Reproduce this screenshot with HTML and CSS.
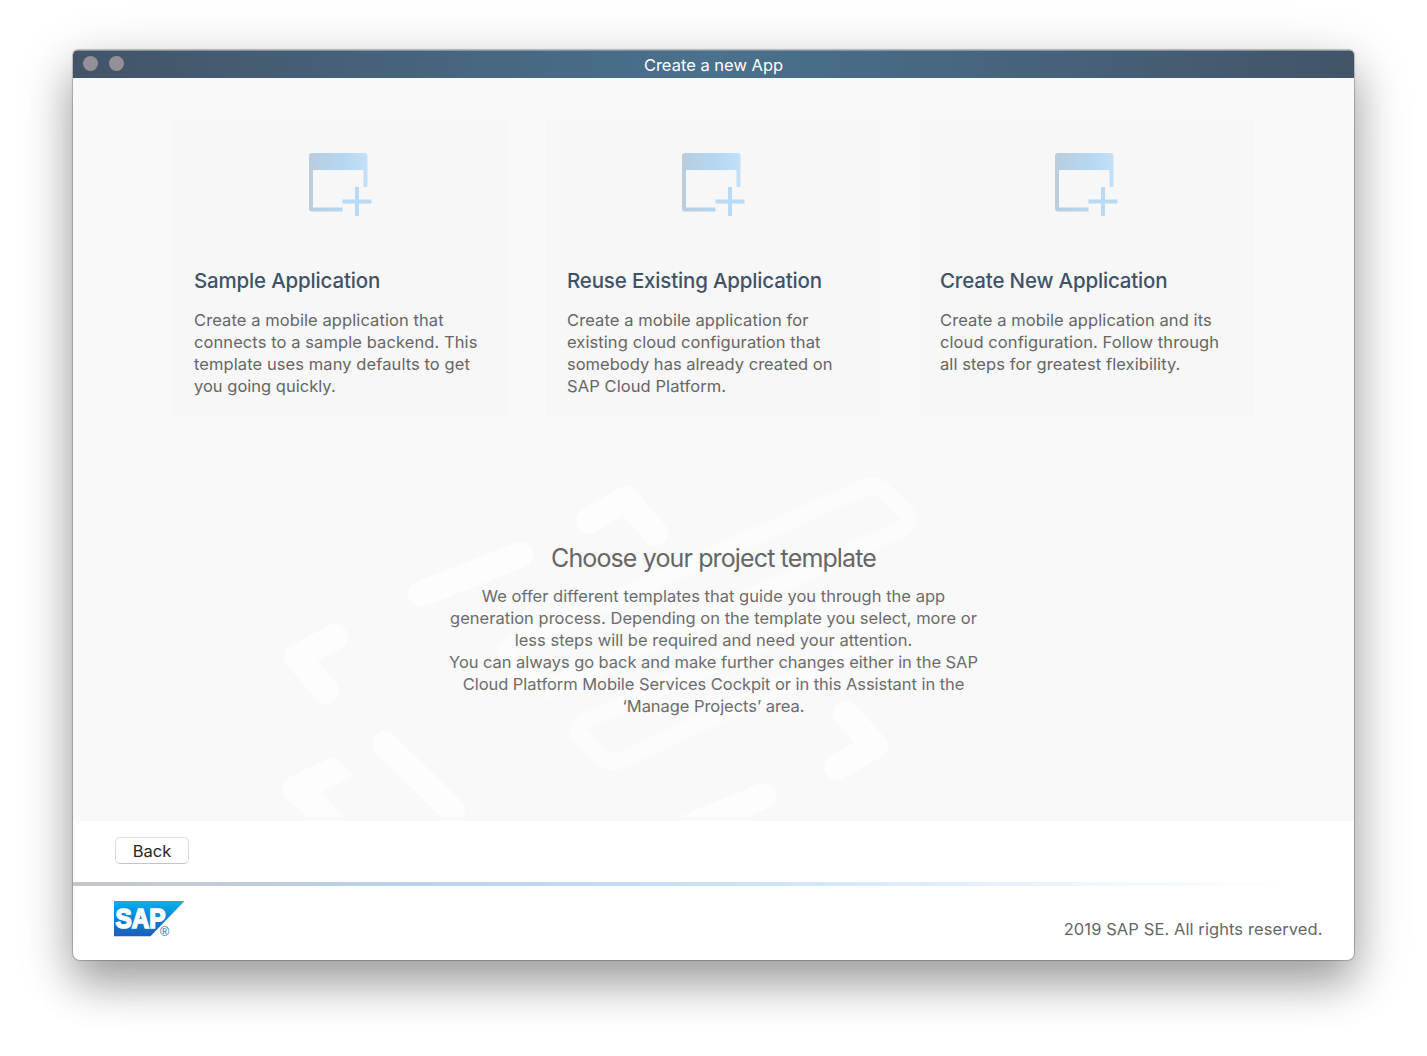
FILE: index.html
```html
<!DOCTYPE html>
<html lang="en">
<head>
<meta charset="utf-8">
<title>Create a new App</title>
<link rel="stylesheet" href="styles.css">
</head>
<body>
<svg class="defs" width="0" height="0" aria-hidden="true">
  <defs>
    <linearGradient id="appGrad" gradientUnits="userSpaceOnUse" x1="0" y1="0" x2="63" y2="0">
      <stop offset="0" stop-color="#b9cddd"/>
      <stop offset=".55" stop-color="#b5d7f3"/>
      <stop offset="1" stop-color="#c6e2f8"/>
    </linearGradient>
    <symbol id="newApp" viewBox="0 0 63 63">
      <path fill="url(#appGrad)" d="M3 0H55.500a3 3 0 0 1 3 3V34H54.500V17H4V54.500H33.500V58.500H3a3 3 0 0 1-3-3V3a3 3 0 0 1 3-3Z"/>
      <path fill="#b8daf4" d="M46 34h4v12.500h12.500v4H50V63h-4V50.500H33.500v-4H46Z"/>
    </symbol>
  </defs>
</svg>
<div class="window">
  <header class="titlebar">
    <div class="lights"><i></i><i></i></div>
    <h1>Create a new App</h1>
  </header>
  <main class="content">
    <svg class="backdrop" viewBox="73 78 1281 739" aria-hidden="true">
      <g fill="none" stroke="#fdfdfd" stroke-linecap="round" stroke-linejoin="round" stroke-width="26">
        <path d="M421 594 520 555"/>
        <path d="M335 637 297 657 326 691"/>
        <path d="M385 744 452 810"/>
        <path d="M589 520.500 626 499 655 533"/>
        <path d="M846 714 875 746 837 767"/>
        <path d="M763 796 680 831"/>
      </g>
      <path fill="#fdfdfd" d="M333.500 756.500 352 773Q354 775 351 777L321.700 792.500 344 817H307L286 799Q278 788 290 777Z"/>
      <g fill="none" stroke="#fcfcfc" stroke-linejoin="round" stroke-width="17">
        <path d="M864 487.500Q874 483 881 489L906 513Q913 522 903 528L553 687Q543 692 535 684L510 660Q502 651 513 644Z"/>
        <path d="M587 720Q573 727 581 736L603 758Q611 765 622 760L868 645Q878 640 870 630L853 612Q848 604 837 609Z"/>
      </g>
    </svg>
    <section class="cards">
      <article class="card">
        <svg class="icon"><use href="#newApp"/></svg>
        <h2>Sample Application</h2>
        <p>Create a mobile application that<br>connects to a sample backend. This<br>template uses many defaults to get<br><span class="tight">you going quickly.</span></p>
      </article>
      <article class="card">
        <svg class="icon"><use href="#newApp"/></svg>
        <h2>Reuse Existing Application</h2>
        <p>Create a mobile application for<br>existing cloud configuration that<br><span class="tight">somebody has already created on</span><br>SAP Cloud Platform.</p>
      </article>
      <article class="card">
        <svg class="icon"><use href="#newApp"/></svg>
        <h2>Create New Application</h2>
        <p>Create a mobile application and its<br>cloud configuration. Follow through<br>all steps for greatest flexibility.</p>
      </article>
    </section>
    <section class="intro">
      <h2>Choose your project template</h2>
      <p class="offer">We offer different templates that guide you through the app<br>generation process. Depending on the template you select, more or<br>less steps will be required and need your attention.</p>
      <p>You can always go back and make further changes either in the SAP<br>Cloud Platform Mobile Services Cockpit or in this Assistant in the<br>‘Manage Projects’ area.</p>
    </section>
  </main>
  <nav class="actions"><button type="button">Back</button></nav>
  <div class="divider"></div>
  <footer class="footer">
    <svg class="logo" viewBox="0 0 71 36" role="img" aria-label="SAP">
      <defs>
        <linearGradient id="sapGrad" x1="0" y1="0" x2="0" y2="1">
          <stop offset="0" stop-color="#06b0ee"/>
          <stop offset=".5" stop-color="#0a83d2"/>
          <stop offset="1" stop-color="#1d5dbd"/>
        </linearGradient>
      </defs>
      <path fill="url(#sapGrad)" d="M0 0H70.500L36.500 35.200H0Z"/>
      <text class="logo-name" x="1.500" y="27" textLength="50" lengthAdjust="spacingAndGlyphs">SAP</text>
      <text class="logo-mark" x="50.600" y="34.500">®</text>
    </svg>
    <p>2019 SAP SE. All rights reserved.</p>
  </footer>
</div>
</body>
</html>
```
FILE: styles.css
```css
* { box-sizing: border-box; margin: 0; padding: 0; }
body {
  height: 1056px;
  padding: 50px 73px 96px;
  overflow: hidden;
  background: #fff;
  color: #666;
  font: 16.5px/22px Inter, "Liberation Sans", sans-serif;
}
.defs { position: absolute; }
.window {
  display: flex;
  flex-direction: column;
  height: 910px;
  border-radius: 5px 5px 7px 7px;
  background: #fff;
  overflow: hidden;
  box-shadow: 0 0 1px 1px rgba(0,0,0,.22), 0 24px 40px rgba(0,0,0,.26), 0 14px 60px rgba(0,0,0,.2);
}
.titlebar {
  display: grid;
  grid-template-columns: 1fr auto 1fr;
  align-items: center;
  height: 28px;
  padding: 0 10px;
  border-top: 1px solid #7e95a5;
  background: linear-gradient(90deg, #435468, #4a718d 50%, #435468);
  color: #fff;
}
.titlebar h1 { font-size: 16.5px; font-weight: 400; line-height: 22px; }
.lights { display: flex; gap: 11px; padding-bottom: 2px; }
.lights i { width: 15px; height: 15px; border-radius: 50%; background: #939197; }
.content { position: relative; height: 743px; padding: 41px 100px 0; background: #f9f9f9; }
.backdrop { position: absolute; left: 0; top: 0; width: 1281px; height: 739px; }
.cards { position: relative; display: grid; grid-template-columns: repeat(3, 335px); justify-content: space-between; }
.card { height: 298px; padding: 34px 21px 0; background: #f7f7f7; }
.icon { display: block; width: 63px; height: 63px; margin: 0 0 0 115px; }
.card h2 { margin: 51px 0 14px; color: #3f5367; font-size: 20.5px; font-weight: 500; line-height: 28px; letter-spacing: -.17px; white-space: nowrap; }
.card p { letter-spacing: .085px; white-space: nowrap; }
.card .tight { letter-spacing: .01px; }
.intro { position: relative; margin-top: 125px; text-align: center; }
.intro h2 { margin-bottom: 11px; font-size: 25px; font-weight: 400; line-height: 32px; letter-spacing: -.87px; }
.intro p { color: #6c6c6c; font-weight: 400; letter-spacing: -.055px; }
.intro .offer { letter-spacing: .02px; }
.actions { height: 61px; padding: 16px 42px; }
button {
  display: block;
  width: 74px;
  height: 27px;
  padding-top: 1px;
  border: 1px solid #dcdcdc;
  border-bottom-color: #c4c4c4;
  border-radius: 5px;
  background: #fff;
  color: #262626;
  font: 16.5px/24px Inter, "Liberation Sans", sans-serif;
}
.divider { height: 4px; background: linear-gradient(90deg, #c6c6c8, #b9d4ec 28%, #cfe4f8 55%, #eef6fd 78%, #fff 95%); }
.footer { flex: 1; display: flex; justify-content: space-between; padding: 15px 31.5px 0 41px; }
.footer p { margin-top: 17px; letter-spacing: .09px; }
.logo { width: 71px; height: 36px; overflow: visible; }
.logo-name { fill: #fff; stroke: #fff; stroke-width: 1.7px; font: 700 27.5px "Liberation Sans", sans-serif; }
.logo-mark { fill: #2564bd; font: 400 12.5px "Liberation Sans", sans-serif; text-anchor: middle; }
```
